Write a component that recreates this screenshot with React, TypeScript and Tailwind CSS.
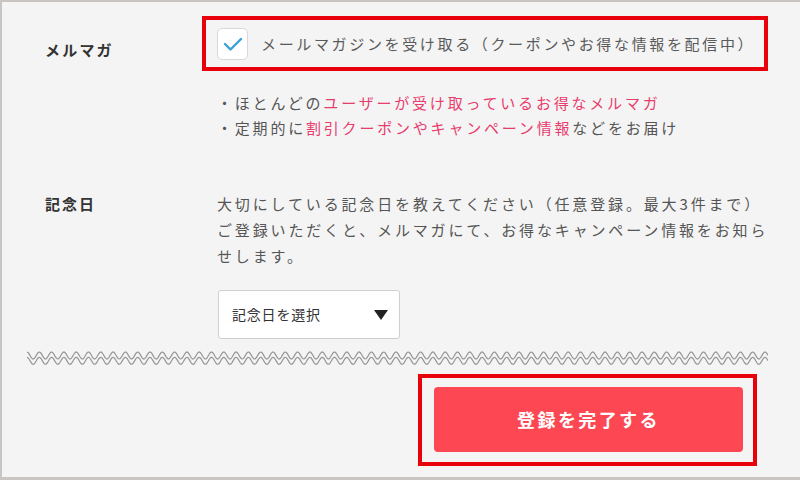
import React from "react";

function wavePath(width: number, cy: number, amp: number, period: number) {
  let d = `M0 ${(cy - amp).toFixed(2)}`;
  for (let x = 1; x <= width; x++) {
    const y = cy - amp * Math.cos((2 * Math.PI * x) / period);
    d += ` L${x} ${y.toFixed(2)}`;
  }
  return d;
}

function Wave() {
  const w = 741;
  return (
    <svg width={w} height={15} viewBox={`0 0 ${w} 15`} className="block">
      <path d={wavePath(w, 4.5, 3.5, 12.3)} fill="none" stroke="#959595" strokeWidth={1.2} />
      <path d={wavePath(w, 9.8, 3.5, 12.3)} fill="none" stroke="#959595" strokeWidth={1.2} />
    </svg>
  );
}

export default function App() {
  return (
    <div className="w-[800px] h-[480px] overflow-hidden bg-[#f4f4f4] border-t-2 border-l-2 border-b-[3px] border-[#c9c5c2] font-['Noto_Sans_CJK_JP','Noto_Sans',sans-serif] text-[#555]">
      {/* Row 1: メルマガ */}
      <div className="flex pt-[14px] pl-[43px]">
        <div className="w-[172px] shrink-0 pt-[22px] text-[15px] leading-[24px] font-bold tracking-[2.2px] text-[#333]">
          メルマガ
        </div>
        <div>
          <div className="-ml-[15px] w-[566px] h-[55px] border-4 border-[#e8000b] flex items-center pl-[11px] gap-[13px]">
            <div className="w-[31px] h-[32px] rounded-[5px] bg-white border border-[#d8d8d8] flex items-center justify-center">
              <svg width="20" height="16" viewBox="0 0 20 16">
                <path d="M2 8 L7.5 13.5 L18 3" fill="none" stroke="#3b9fd8" strokeWidth={2.4} strokeLinecap="round" strokeLinejoin="round" />
              </svg>
            </div>
            <span className="text-[15px] leading-[24px] tracking-[2.65px] text-[#5a5a5a]">
              メールマガジンを受け取る（クーポンやお得な情報を配信中）
            </span>
          </div>
          <div className="mt-[19px] text-[15px] leading-[25px] tracking-[2.8px]">
            <div>
              ・ほとんどの<span className="text-[#e73c6e]">ユーザーが受け取っているお得なメルマガ</span>
            </div>
            <div>
              ・定期的に<span className="text-[#e73c6e]">割引クーポンやキャンペーン情報</span>などをお届け
            </div>
          </div>
        </div>
      </div>

      {/* Row 2: 記念日 */}
      <div className="flex pl-[43px] mt-[51px]">
        <div className="w-[172px] shrink-0 text-[15px] leading-[26px] font-bold tracking-[2px] text-[#333]">
          記念日
        </div>
        <div>
          <p className="text-[15px] leading-[26px] tracking-[2.85px]">
            大切にしている記念日を教えてください（任意登録。最大3件まで）
            <br />
            ご登録いただくと、メルマガにて、お得なキャンペーン情報をお知ら
            <br />
            せします。
          </p>
          <div className="ml-[1px] mt-[21px] w-[182px] h-[49px] bg-white border border-[#cfcfcf] rounded-[3px] flex items-center justify-between pl-[13px] pr-[11px]">
            <span className="text-[14px] tracking-[0.8px] text-[#333]">記念日を選択</span>
            <svg width="14" height="10" viewBox="0 0 14 10">
              <path d="M0 0 H14 L7 10 Z" fill="#222" />
            </svg>
          </div>
        </div>
      </div>

      {/* Wave divider */}
      <div className="ml-[25px] mt-[12px]">
        <Wave />
      </div>

      {/* Submit */}
      <div className="pl-[416px] mt-[8px]">
        <div className="w-[339px] h-[92px] border-4 border-[#e8000b] pl-[12px] pt-[9px]">
          <button className="w-[309px] h-[65px] rounded-[4px] bg-[#fd4854] text-white text-[18px] font-bold tracking-[2.4px] flex items-center justify-center">
            登録を完了する
          </button>
        </div>
      </div>
    </div>
  );
}
